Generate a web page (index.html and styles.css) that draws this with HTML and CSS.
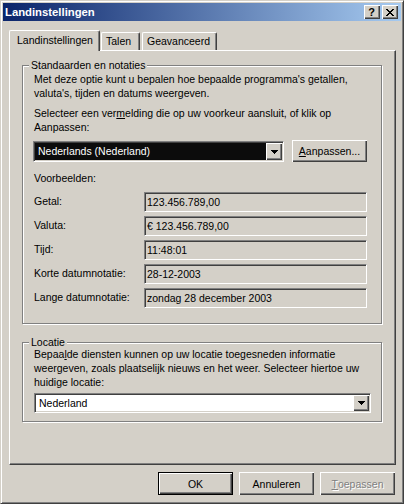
FILE: index.html
```html
<!DOCTYPE html>
<html>
<head>
<meta charset="utf-8">
<title>Landinstellingen</title>
<link rel="stylesheet" href="styles.css">
</head>
<body>
<div class="window">
  <div class="titlebar">
    <span class="title">Landinstellingen</span>
    <div class="caption-btns">
      <span class="cbtn help">?</span>
      <span class="cbtn close"><svg width="8" height="7" viewBox="0 0 8 7"><path d="M0 0h2v1H0z M6 0h2v1H6z M1 1h2v1H1z M5 1h2v1H5z M2 2h4v1H2z M3 3h2v1H3z M2 4h4v1H2z M1 5h2v1H1z M5 5h2v1H5z M0 6h2v1H0z M6 6h2v1H6z" fill="#000"/></svg></span>
    </div>
  </div>
  <div class="tabs">
    <div class="tab active">Landinstellingen</div>
    <div class="tab t-talen">Talen</div>
    <div class="tab t-geav">Geavanceerd</div>
  </div>
  <div class="panel">
    <div class="group g1">
      <span class="legend">Standaarden en notaties</span>
      <p>Met deze optie kunt u bepalen hoe bepaalde programma's getallen,<br>valuta's, tijden en datums weergeven.</p>
      <p class="p2">Selecteer een ver<u>m</u>elding die op uw voorkeur aansluit, of klik op<br>Aanpassen:</p>
      <div class="combo-row">
        <div class="combo c1">
          <div class="combo-text sel">Nederlands (Nederland)</div>
          <div class="drop"><svg width="7" height="4" viewBox="0 0 7 4"><path d="M0 0h7v1H0z M1 1h5v1H1z M2 2h3v1H2z M3 3h1v1H3z" fill="#000"/></svg></div>
        </div>
        <div class="btn aanpassen"><u>A</u>anpassen...</div>
      </div>
      <div class="vb">Voorbeelden:</div>
      <div class="rows">
        <div class="row"><span class="lbl">Getal:</span><div class="field">123.456.789,00</div></div>
        <div class="row"><span class="lbl">Valuta:</span><div class="field">€ 123.456.789,00</div></div>
        <div class="row"><span class="lbl">Tijd:</span><div class="field">11:48:01</div></div>
        <div class="row"><span class="lbl">Korte datumnotatie:</span><div class="field">28-12-2003</div></div>
        <div class="row"><span class="lbl">Lange datumnotatie:</span><div class="field">zondag 28 december 2003</div></div>
      </div>
    </div>
    <div class="group g2">
      <span class="legend">Locatie</span>
      <p>Bepaa<u>l</u>de diensten kunnen op uw locatie toegesneden informatie<br>weergeven, zoals plaatselijk nieuws en het weer. Selecteer hiertoe uw<br>huidige locatie:</p>
      <div class="combo c2">
        <div class="combo-text">Nederland</div>
        <div class="drop"><svg width="7" height="4" viewBox="0 0 7 4"><path d="M0 0h7v1H0z M1 1h5v1H1z M2 2h3v1H2z M3 3h1v1H3z" fill="#000"/></svg></div>
      </div>
    </div>
  </div>
  <div class="buttons">
    <div class="btn default">OK</div>
    <div class="btn">Annuleren</div>
    <div class="btn disabled"><u>T</u>oepassen</div>
  </div>
</div>
</body>
</html>
```
FILE: styles.css
```css
* { box-sizing: border-box; }
html, body { margin: 0; padding: 0; background: #d4d0c8; }
body {
  font-family: "Liberation Sans", Arial, sans-serif;
  font-size: 10.5px;
  color: #000;
}
.window {
  width: 404px;
  height: 504px;
  background: #d4d0c8;
  border: 1px solid;
  border-color: #d4d0c8 #404040 #404040 #d4d0c8;
  box-shadow: inset 1px 1px #fff, inset -1px -1px #808080;
  padding: 2px;
  display: flex;
  flex-direction: column;
}
.titlebar {
  height: 18px;
  flex: none;
  background: linear-gradient(to right, #0a246a, #a6caf0);
  display: flex;
  align-items: center;
  padding-left: 2px;
}
.title {
  color: #fff;
  font-weight: bold;
  font-size: 11.3px;
  line-height: 18px;
}
.caption-btns {
  margin-left: auto;
  margin-right: 3px;
  display: flex;
  gap: 2px;
}
.cbtn {
  width: 16px;
  height: 14px;
  background: #d4d0c8;
  box-shadow: inset 1px 1px #fff, inset -1px -1px #404040, inset -2px -2px #808080;
  display: flex;
  align-items: center;
  justify-content: center;
}
.help {
  font-weight: bold;
  font-size: 11px;
  line-height: 14px;
  padding-right: 1px;
}
.close svg { display: block; shape-rendering: crispEdges; margin-right: 1px; }

.tabs {
  flex: none;
  margin-top: 9px;
  height: 20px;
  display: flex;
  align-items: flex-end;
  padding-left: 6px;
}
.tab {
  background: #d4d0c8;
  border-left: 1px solid #fff;
  border-top: 1px solid #fff;
  border-right: 1px solid #404040;
  box-shadow: inset -1px 0 #808080;
  border-radius: 2px 2px 0 0;
  height: 18px;
  line-height: 13px;
  padding-top: 2px;
  white-space: nowrap;
}
.tab.active {
  position: relative;
  z-index: 1;
  height: 21px;
  margin-bottom: -1px;
  width: 91px;
  padding-left: 7px;
  padding-top: 3px;
}
.t-talen { width: 39px; margin-left: 1px; padding-left: 4px; }
.t-geav { width: 75px; margin-left: 2px; padding-left: 4px; }

.panel {
  flex: none;
  margin-left: 6px;
  width: 387px;
  height: 415px;
  border: 1px solid;
  border-color: #fff #404040 #404040 #fff;
  box-shadow: inset -1px -1px #808080;
  padding-left: 12px;
  padding-top: 14px;
}
.group {
  position: relative;
  width: 360px;
  border: 1px solid #808080;
  box-shadow: inset 1px 1px #fff, 1px 1px #fff;
  padding-left: 11px;
}
.legend {
  position: absolute;
  top: -7px;
  left: 6px;
  padding: 0 2px;
  line-height: 13px;
  background: #d4d0c8;
  white-space: nowrap;
}
.group p {
  margin: 0;
  line-height: 14px;
  white-space: nowrap;
}
.g1 { padding-top: 6px; padding-bottom: 15px; }
.g1 .p2 { margin-top: 6px; }
.combo-row {
  display: flex;
  align-items: flex-start;
  margin-top: 6px;
  height: 22px;
}
.combo {
  display: flex;
  border: 1px solid;
  border-color: #808080 #fff #fff #808080;
  box-shadow: inset 1px 1px #404040, inset -1px -1px #d4d0c8;
  padding: 1px;
  background: #fff;
}
.combo-text {
  flex: 1;
  padding-left: 3px;
  white-space: nowrap;
}
.combo-text.sel {
  background: #0c0c0c;
  color: #fff;
}
.drop {
  width: 16px;
  flex: none;
  background: #d4d0c8;
  box-shadow: inset 1px 1px #fff, inset -1px -1px #404040, inset -2px -2px #808080;
  display: flex;
  align-items: center;
  justify-content: center;
}
.drop svg { display: block; shape-rendering: crispEdges; }
.c1 {
  width: 251px;
  height: 21px;
  margin-left: -1px;
  margin-top: 1px;
}
.c1 .combo-text { line-height: 17px; }
.btn {
  width: 75px;
  height: 23px;
  background: #d4d0c8;
  box-shadow: inset 1px 1px #fff, inset -1px -1px #404040, inset -2px -2px #808080;
  display: flex;
  align-items: center;
  justify-content: center;
  white-space: nowrap;
}
.aanpassen {
  margin-left: 8px;
  height: 22px;
}
.vb {
  margin-top: 9px;
  line-height: 14px;
}
.rows { margin-top: 7px; }
.row {
  display: flex;
  align-items: flex-start;
  height: 20px;
}
.row + .row { margin-top: 4px; }
.lbl {
  width: 110px;
  flex: none;
  line-height: 14px;
  padding-top: 2px;
  white-space: nowrap;
}
.field {
  width: 223px;
  height: 20px;
  border: 1px solid;
  border-color: #808080 #fff #fff #808080;
  box-shadow: inset 1px 1px #404040, inset -1px -1px #d4d0c8;
  padding: 1px 1px 1px 2px;
  line-height: 16px;
  white-space: nowrap;
}
.g2 {
  margin-top: 18px;
  padding-top: 4px;
  padding-bottom: 8px;
}
.c2 {
  width: 337px;
  height: 20px;
  margin-top: 4px;
}
.c2 .combo-text { line-height: 16px; }

.buttons {
  flex: none;
  margin-top: 7px;
  display: flex;
  justify-content: flex-end;
  gap: 6px;
  padding-right: 6px;
}
.btn.default {
  border: 1px solid #000;
}
.btn.disabled {
  color: #808080;
  text-shadow: 1px 1px #fff;
}
```
